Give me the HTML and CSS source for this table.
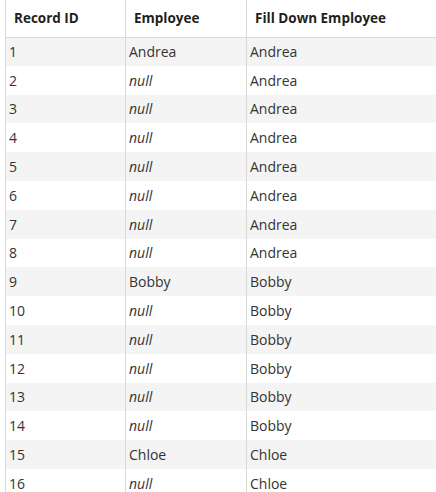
FILE: index.html
```html
<!DOCTYPE html>
<html>
<head>
<meta charset="utf-8">
<link rel="stylesheet" href="styles.css">
</head>
<body>
<div class="wrap">
<table class="grid">
<thead>
<tr><th class="c1">Record ID</th><th class="c2">Employee</th><th class="c3">Fill Down Employee</th></tr>
</thead>
<tbody>
<tr><td>1</td><td>Andrea</td><td>Andrea</td></tr>
<tr><td>2</td><td class="null">null</td><td>Andrea</td></tr>
<tr><td>3</td><td class="null">null</td><td>Andrea</td></tr>
<tr><td>4</td><td class="null">null</td><td>Andrea</td></tr>
<tr><td>5</td><td class="null">null</td><td>Andrea</td></tr>
<tr><td>6</td><td class="null">null</td><td>Andrea</td></tr>
<tr><td>7</td><td class="null">null</td><td>Andrea</td></tr>
<tr><td>8</td><td class="null">null</td><td>Andrea</td></tr>
<tr><td>9</td><td>Bobby</td><td>Bobby</td></tr>
<tr><td>10</td><td class="null">null</td><td>Bobby</td></tr>
<tr><td>11</td><td class="null">null</td><td>Bobby</td></tr>
<tr><td>12</td><td class="null">null</td><td>Bobby</td></tr>
<tr><td>13</td><td class="null">null</td><td>Bobby</td></tr>
<tr><td>14</td><td class="null">null</td><td>Bobby</td></tr>
<tr><td>15</td><td>Chloe</td><td>Chloe</td></tr>
<tr><td>16</td><td class="null">null</td><td>Chloe</td></tr>
</tbody>
</table>
</div>
</body>
</html>
```
FILE: styles.css
```css
html, body {
  margin: 0;
  padding: 0;
  background: #ffffff;
  overflow: hidden;
}
.wrap {
  padding-left: 5px;
}
.grid {
  border-collapse: collapse;
  table-layout: fixed;
  width: 440px;
  font-family: "Open Sans", "Noto Sans", sans-serif;
  font-size: 14px;
  color: #333333;
  border-left: 1px solid #d9d9d9;
}
.grid th {
  height: 37px;
  padding: 0 0 0 8px;
  text-align: left;
  font-size: 13.5px;
  font-weight: 700;
  color: #1f1f1f;
  border-bottom: 1px solid #d9d9d9;
  border-right: 1px solid #d9d9d9;
  box-sizing: border-box;
}
.grid .c1 { width: 120px; }
.grid .c2 { width: 121px; }
.grid th:last-child { border-right: none; }
.grid td {
  height: 28.8px;
  padding: 0 0 0 3px;
  border-right: 1px solid #d9d9d9;
  white-space: nowrap;
  box-sizing: border-box;
}
.grid td:last-child { border-right: none; }
.grid tbody tr:nth-child(odd) { background: #f4f4f4; }
.grid td.null { font-style: italic; }
```
